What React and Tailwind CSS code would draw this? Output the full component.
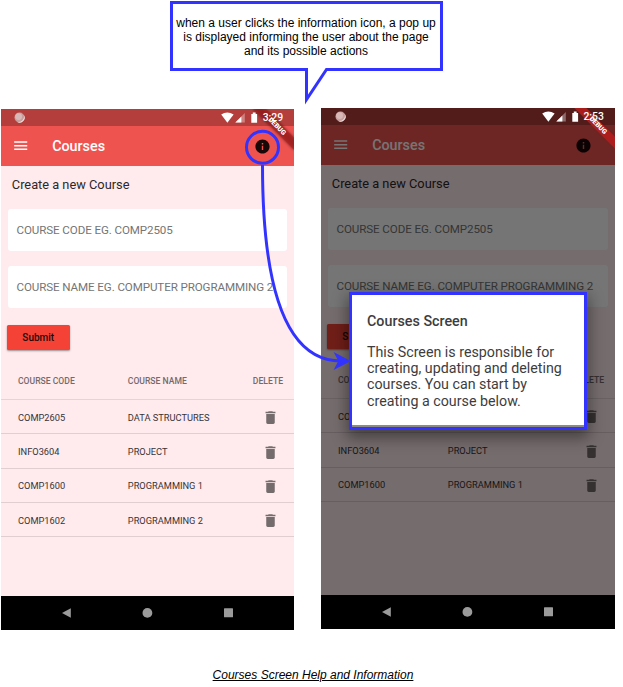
import React from "react";
import { MdMenu, MdInfo, MdDelete } from "react-icons/md";

function StatusIcons({ time, wide }) {
  return (
    <div className={"absolute inset-x-0 top-0 h-[17px] " + (wide ? "pl-[0.6px]" : "")}>
      <svg className="block h-[17px] w-[293px]" viewBox="0 0 293 17">
        <circle cx="18.5" cy="8.5" r="5" fill="#c99f9d" />
        <path d="M15.5 12.5a5 5 0 0 0 7.2-6.8a5.4 5.4 0 0 1-7.2 6.8z" fill="#f3e3e2" />
        <circle cx="17.6" cy="7.6" r="3.4" fill="#d9b9b7" />
        <path d="M220.2 5.4Q226.2 1.4 232.6 5.4L226.4 13.8z" fill="#fff" />
        <path d="M243.8 4v9.5h-9.5z" fill="#fff" fillOpacity="0.35" />
        <path d="M240.4 7.4v6.1h-6.1z" fill="#fff" />
        <path d="M250.3 4.9h1.5V3.6h2.8v1.3h1.5v8.8h-5.8z" fill="#fff" />
      </svg>
      <span className={"absolute top-[2px] text-[10.4px] font-medium leading-[14px] text-white " + (wide ? "left-[262.4px]" : "left-[261.7px]")}>{time}</span>
    </div>
  );
}

function DebugBanner({ dimmed }) {
  return (
    <svg className="absolute right-0 top-0 size-[56px]" viewBox="0 0 56 56">
      <defs>
        <filter id="soft" x="-20%" y="-60%" width="140%" height="220%">
          <feGaussianBlur stdDeviation="1.6" />
        </filter>
      </defs>
      <g transform="translate(56 0) rotate(45)">
        <rect x="-29" y="20.3" width="58" height="8.5" fill="#000" fillOpacity={dimmed ? 0.1 : 0.5} filter="url(#soft)" />
        <rect x="-29" y="20.3" width="58" height="8.5" fill="#b71c1c" fillOpacity={dimmed ? 0.88 : 0.63} />
        <text x="0.3" y="26.3" textAnchor="middle" fontSize="6.8" fontWeight="900" fill="#fff">DEBUG</text>
      </g>
    </svg>
  );
}

function Field({ children }) {
  return (
    <div className="flex h-[42px] items-center rounded-[3px] bg-white pl-[8.5px] pt-px text-[11.6px] tracking-[-0.1px] whitespace-nowrap text-[#757575]">
      {children}
    </div>
  );
}

function Phone({ time, rows, dimmed, wide }) {
  return (
    <div className={"relative flex h-[521px] shrink-0 flex-col overflow-hidden bg-[#ffebee] " + (wide ? "w-[294px]" : "w-[293px]")}>
      <div className="h-[17px] shrink-0 bg-[#b43e3b]" />
      <div className="flex h-10 shrink-0 items-center bg-[#ef5350] pl-[11.2px] pr-[22.7px]">
        <MdMenu className="size-[17.4px] text-white" />
        <span className="ml-[22.6px] pt-px text-[14.3px] font-medium text-white">Courses</span>
        <MdInfo className="ml-auto size-[17px] text-black/90" />
      </div>
      <div className="flex min-h-0 grow flex-col">
        <div className="pl-[10.8px] pt-[11px] text-[12.8px] leading-4 text-[#2c2829]">Create a new Course</div>
        <div className="flex flex-col gap-[14.5px] px-[7px] pt-[16.3px]">
          <Field>COURSE CODE EG. COMP2505</Field>
          <Field>COURSE NAME EG. COMPUTER PROGRAMMING 2</Field>
        </div>
        <button className="ml-[6px] mt-[17px] h-[25.5px] w-[62.5px] shrink-0 rounded-[1.5px] bg-[#f44336] text-[10px] font-medium text-[#210908] shadow-[0_1px_2px_rgba(0,0,0,0.4)]">
          Submit
        </button>
        <div className="mt-[10px] grid h-[40px] shrink-0 grid-cols-[109.8px_1fr_auto] items-center border-b border-black/10 pl-[17px] pr-[11px] pt-[3px] text-[8.6px] font-medium text-[#736a6b]">
          <span>COURSE CODE</span>
          <span>COURSE NAME</span>
          <span>DELETE</span>
        </div>
        {rows.map(([code, name]) => (
          <div key={code} className="grid h-[34.2px] shrink-0 grid-cols-[109.8px_1fr_17px] items-center border-b border-black/12 pl-[17px] pr-[15.2px] pt-[2px] text-[9.27px] text-[#383334]">
            <span>{code}</span>
            <span>{name}</span>
            <MdDelete className="size-[17px] text-[#746b6c]" />
          </div>
        ))}
      </div>
      <div className="h-[34px] shrink-0 bg-black">
        <svg className="block h-[34px] w-[293px]" viewBox="0 0 293 34" fill="#9b9b9b">
          <path d="M61 17L69.8 12.2V21.8z" />
          <circle cx="146.4" cy="16.9" r="4.9" />
          <rect x="223" y="12.3" width="9" height="9" rx="0.5" />
        </svg>
      </div>
      {dimmed && <div className="absolute inset-x-0 top-0 h-[487px] bg-black/54" />}
      <DebugBanner dimmed={dimmed} />
      <StatusIcons time={time} wide={wide} />
    </div>
  );
}

function Annotations() {
  return (
    <svg className="absolute left-0 top-0 h-[687px] w-[623px]" viewBox="0 0 623 687" fill="none" stroke="#3333ff" strokeWidth="3">
      <path d="M171.5 2.5H441.5V69.5H326.5L306.5 99.5V69.5H171.5z" />
      <circle cx="262.5" cy="147.3" r="16" />
      <path d="M262.5 165Q262.5 361 341 361" />
      <path d="M348.5 361L336 367.5L339.5 361L336 354.5z" fill="#3333ff" strokeWidth="2" />
    </svg>
  );
}

const courses = [
  ["COMP2605", "DATA STRUCTURES"],
  ["INFO3604", "PROJECT"],
  ["COMP1600", "PROGRAMMING 1"],
  ["COMP1602", "PROGRAMMING 2"],
];

export default function App() {
  return (
    <div className="relative flex h-[687px] w-[623px] flex-col overflow-hidden bg-white font-['Roboto',sans-serif]">
      <div className="ml-[170px] flex h-[108px] w-[272px] shrink-0 flex-col pt-[16px] text-center font-['Liberation_Sans',Arial,sans-serif] text-[12px] leading-[14px] whitespace-nowrap text-black">
        <span>when a user clicks the information icon, a pop up</span>
        <span>is displayed informing the user about the page</span>
        <span>and its possible actions</span>
      </div>
      <div className="flex h-[522px] shrink-0 items-start gap-[27px] pl-px">
        <div className="pt-px">
          <Phone time="3:29" rows={courses} />
        </div>
        <Phone time="2:53" rows={courses.slice(0, 3)} dimmed wide />
      </div>
      <div className="ml-px mt-[38px] w-[624px] text-center font-['Liberation_Sans',Arial,sans-serif] text-[12px] leading-[14px] text-black italic underline">
        Courses Screen Help and Information
      </div>
      <div className="absolute left-[349px] top-[292px] h-[138px] w-[238px] border-3 border-[#3333ff] bg-white pl-[15px] pt-[17px] text-[#3d3d3d] shadow-[0_6px_14px_2px_rgba(0,0,0,0.4)]">
        <div className="text-[14.3px] leading-[18px] font-medium">Courses Screen</div>
        <div className="mt-[13.5px] text-[14.25px] leading-[16.4px] whitespace-nowrap">
          This Screen is responsible for<br />
          creating, updating and deleting<br />
          courses. You can start by<br />
          creating a course below.
        </div>
        <div className="absolute inset-x-0 bottom-0 h-[2px] bg-[#8c8c84]" />
      </div>
      <Annotations />
    </div>
  );
}
